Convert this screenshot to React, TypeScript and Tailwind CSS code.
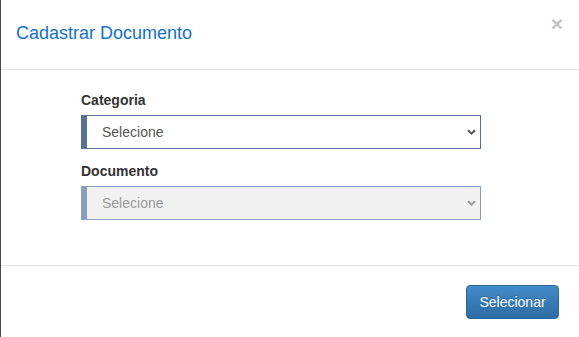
function Chevron({ color }: { color: string }) {
    return (
        <svg width="9" height="6" viewBox="0 0 9 6" className="shrink-0">
            <path d="M1 1.2 L4.5 4.6 L8 1.2" fill="none" stroke={color} strokeWidth="2" />
        </svg>
    );
}

function SelectField({ label, disabled }: { label: string; disabled?: boolean }) {
    return (
        <div className="flex flex-col">
            <label className="text-[14px] leading-5 font-bold text-[#333333] mb-[5px]">{label}</label>
            <div
                className={
                    disabled
                        ? 'flex items-center h-[34px] border border-[#8a9dbd] border-l-[6px] bg-[#f1f1f1] pl-[15px] pr-[4px]'
                        : 'flex items-center h-[34px] border border-[#5a7096] border-l-[6px] bg-white pl-[15px] pr-[4px]'
                }
            >
                <span className={disabled ? 'flex-1 text-[14px] text-[#9a9a9a]' : 'flex-1 text-[14px] text-[#555555]'}>
                    Selecione
                </span>
                <Chevron color={disabled ? '#9a9a9a' : '#555555'} />
            </div>
        </div>
    );
}

export default function App() {
    return (
        <div className="w-[579px] h-[337px] bg-white border-l border-[#4a4a4a] flex flex-col font-['Liberation_Sans',Arial,sans-serif]">
            <div className="h-[70px] flex items-center justify-between pl-[15px] pr-[16px] pb-[3px] border-b border-[#e5e5e5]">
                <h4 className="text-[18px] text-[#1470d2]">Cadastrar Documento</h4>
                <span className="self-start mt-[13px] text-[21px] font-bold leading-none text-[#c4c4c4]">×</span>
            </div>
            <div className="h-[196px] border-b border-[#e5e5e5] pt-[20px] pl-[80px] pr-[98px] flex flex-col gap-[12px]">
                <SelectField label="Categoria" />
                <SelectField label="Documento" disabled />
            </div>
            <div className="flex justify-end pt-[19px] pr-[20px]">
                <button className="h-[34px] w-[93px] rounded-[4px] border border-[#2b669a] bg-gradient-to-b from-[#428bca] to-[#2d6ca2] text-white text-[14px] [text-shadow:0_-1px_0_rgba(0,0,0,0.2)]">
                    Selecionar
                </button>
            </div>
        </div>
    );
}
